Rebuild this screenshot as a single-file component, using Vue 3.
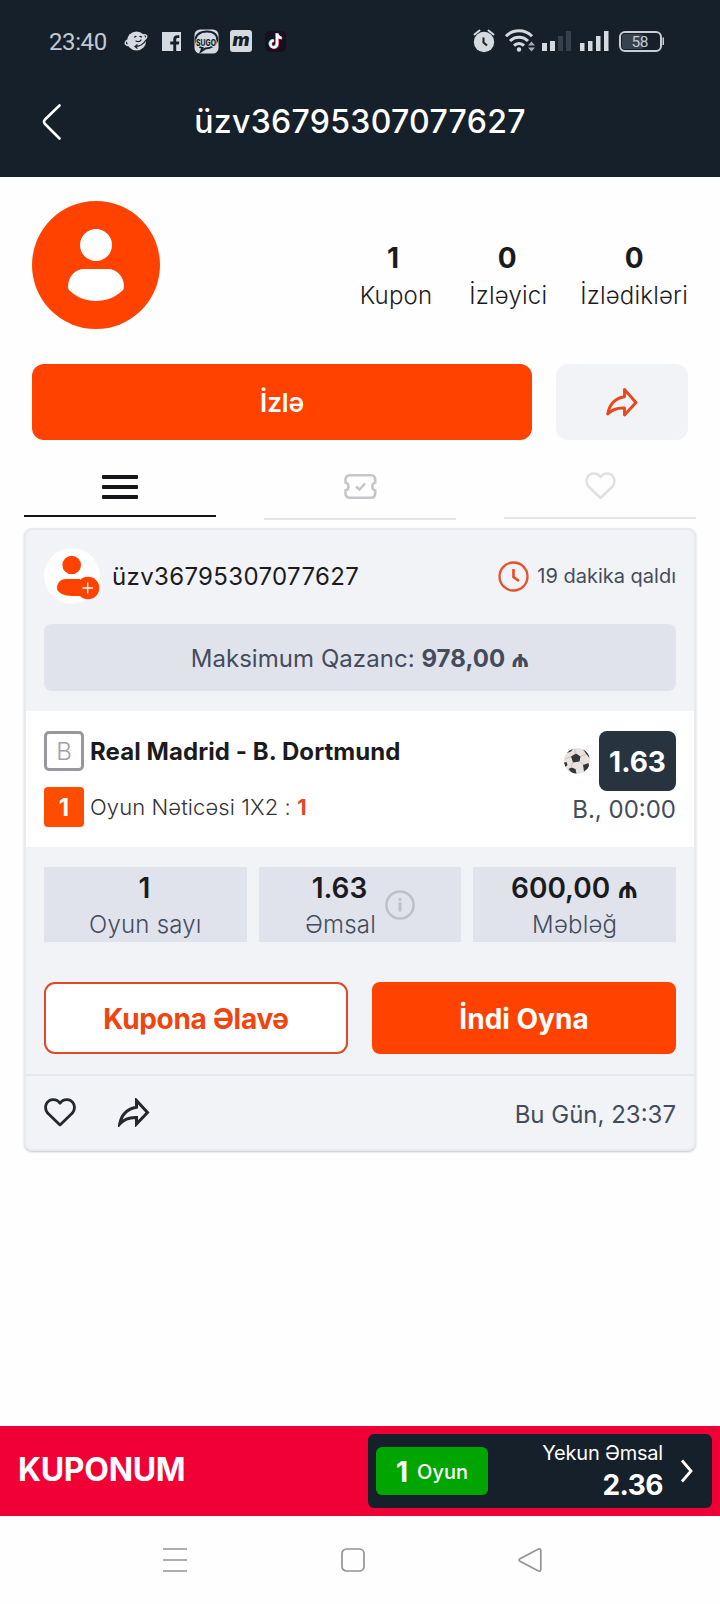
<script setup>
const member = 'üzv36795307077627'
const stats = [
  { value: '1', label: 'Kupon', cls: 'kupon' },
  { value: '0', label: 'İzləyici', cls: 'followers' },
  { value: '0', label: 'İzlədikləri', cls: 'following' },
]
</script>

<template>
  <div class="screen">
    <header class="top">
      <div class="status">
        <span class="clock">23:40</span>
        <svg class="apps" width="168" height="28" viewBox="122 28 168 28">
          <g>
            <circle cx="136.500" cy="41" r="9.600" fill="#d5d9e0" />
            <path d="M127 40c-5 5 1 7 9 4 7-2 13-7 10-9-1-.7-2-.4-3.500.2" fill="none" stroke="#d5d9e0" stroke-width="1.500" />
            <path d="M135 46.500c5 0 9-3 11-6.500M137.500 44.500l-2.500 2 2.500 2" fill="none" stroke="#15202b" stroke-width="1.200" />
            <path d="M134.500 37l1.500-.6M140 36.500l1.500.3M136 41c2 1 4 .5 5-1" fill="none" stroke="#15202b" stroke-width="1.300" stroke-linecap="round" />
          </g>
          <rect x="162" y="32" width="19" height="19" fill="#d5d9e0" />
          <path d="M173.300 51v-6.500h-3.100v-3h3.100v-2.300c0-2.800 1.600-4 4-4h2v2.700h-1.600c-1.100 0-1.500.5-1.500 1.500v2.100h3.100l-.4 3h-2.700V51z" fill="#15202b" />
          <rect x="194.500" y="29.500" width="24" height="24" rx="5.500" fill="#d5d9e0" />
          <path d="M196 42c-1.500-7 4-10.500 11-10.500S218 35 217 41c-1 4-6 7.500-11.500 7.500L201 51.500l1.500-3.500c-3.500-1-5.500-3-6.500-6z" fill="none" stroke="#15202b" stroke-width="2" />
          <text x="196" y="45.500" class="sugo" textLength="20" lengthAdjust="spacingAndGlyphs">SUGO</text>
          <rect x="230" y="30" width="22" height="22" rx="3" fill="#d5d9e0" />
          <text x="232.500" y="46" class="mm" textLength="17" lengthAdjust="spacingAndGlyphs">m</text>
          <rect x="265" y="31" width="21" height="21" rx="5" fill="#180f20" />
          <g fill="none" stroke-width="2.500" transform="translate(1 0)">
            <path d="M276.200 33.500v10.500a3.400 3.400 0 1 1-3.400-3.400M276.200 33.500c.3 2.700 2 4.200 4.500 4.500" stroke="#25e5e2" transform="translate(-.7 -.4)" />
            <path d="M276.200 33.500v10.500a3.400 3.400 0 1 1-3.400-3.400M276.200 33.500c.3 2.700 2 4.200 4.500 4.500" stroke="#ee1e52" transform="translate(.6 .5)" />
            <path d="M276.200 33.500v10.500a3.400 3.400 0 1 1-3.400-3.400M276.200 33.500c.3 2.700 2 4.200 4.500 4.500" stroke="#fff" />
          </g>
        </svg>
        <svg class="signals" width="194" height="28" viewBox="472 28 194 28">
          <circle cx="484" cy="42" r="10.200" fill="#d5d9e0" />
          <path d="M474.500 34.500l5-4M493.500 34.500l-5-4" stroke="#d5d9e0" stroke-width="2" stroke-linecap="round" />
          <path d="M483.500 37.500v5l3.500 3" fill="none" stroke="#15202b" stroke-width="2" />
          <g fill="none" stroke="#d5d9e0" stroke-width="3">
            <path d="M506 36.200a18.500 18.500 0 0 1 26 0" />
            <path d="M510 41a12.500 12.500 0 0 1 18 0" />
            <path d="M514 45.600a7 7 0 0 1 10 0" />
          </g>
          <circle cx="519" cy="49.500" r="2.200" fill="#d5d9e0" />
          <path d="M528 45.500l3.500-4 3.500 4zM528 47.500l3.500 4 3.500-4z" fill="#a4abb5" />
          <path d="M542 43h5v8h-5zM550 41h5v10h-5z" fill="#d5d9e0" />
          <path d="M558 36h5v15h-5zM566 31h5v20h-5z" fill="#34404b" />
          <path d="M580 43h4.500v8H580zM588 41h4.500v10H588zM596 36h4.500v15H596zM604 31h4.500v20H604z" fill="#d5d9e0" />
          <rect x="620" y="32" width="41" height="19" rx="5" fill="#15202b" stroke="#c8cdd4" stroke-width="2" />
          <rect x="622" y="34" width="21" height="15" rx="2.500" fill="#36424d" />
          <rect x="662.500" y="37.500" width="1.500" height="7.500" fill="#c8cdd4" />
          <text x="631.500" y="47" class="charge" textLength="17">58</text>
        </svg>
      </div>
      <div class="titlebar">
        <svg class="back" width="20" height="38" viewBox="0 0 20 38">
          <path d="M17.500 2.500L3 16.500Q1 18.800 3 21L17.500 35.500" fill="none" stroke="#fff" stroke-width="2.600" stroke-linecap="round" stroke-linejoin="round" />
        </svg>
        <h1>{{ member }}</h1>
      </div>
    </header>

    <section class="profile">
      <svg width="128" height="128" viewBox="0 0 128 128">
        <circle cx="64" cy="64" r="64" fill="#ff4200" />
        <circle cx="64" cy="44" r="16" fill="#fff" />
        <path d="M52 68H76C85 68 92 76 92 85.500Q92 88 90.500 89.500C76 103.500 52 103.500 37.500 89.500Q36 88 36 85.500C36 76 43 68 52 68Z" fill="#fff" />
      </svg>
      <div class="stats">
        <div v-for="s in stats" :key="s.label" class="stat" :class="s.cls">
          <b>{{ s.value }}</b>
          <span>{{ s.label }}</span>
        </div>
      </div>
    </section>

    <div class="actions">
      <button class="follow"><span>İzlə</span></button>
      <button class="share">
        <svg width="32" height="29" viewBox="0 0 32 29"><path d="M18.500 1.500L30 14.500L18.500 27V20Q8 19.500 1.700 26Q4.500 11 18.500 8.700Z" fill="none" stroke="#e8481c" stroke-width="2.900" stroke-linejoin="round" /></svg>
      </button>
    </div>

    <nav class="tabs">
      <div class="tab active">
        <i /><i /><i />
      </div>
      <div class="tab second">
        <svg width="33" height="25" viewBox="0 0 33 25">
          <path d="M6 1.300H27Q31.200 1.300 31.200 6V8.500C29.500 9 28.300 10.500 28.300 12.500S29.500 16 31.200 16.500V19Q31.200 23.700 27 23.700H6Q1.500 23.700 1.500 19V16.500C3.300 16 4.500 14.500 4.500 12.500S3.300 9 1.500 8.500V6Q1.500 1.300 6 1.300Z" fill="none" stroke="#c5c6c9" stroke-width="2.600" />
          <path d="M12 12.500L15.500 15.500L21 9.500" fill="none" stroke="#c5c6c9" stroke-width="2.500" />
        </svg>
      </div>
      <div class="tab third">
        <svg width="31" height="28" viewBox="0 0 31 28"><path d="M15.500 26L3.500 14.500C-.5 9.500 2 1.500 9 1.500C12 1.500 14.300 3.200 15.500 5C16.700 3.200 19 1.500 22 1.500C29 1.500 31.500 9.500 27.500 14.500Z" fill="none" stroke="#e0e0e5" stroke-width="2.500" stroke-linejoin="round" /></svg>
      </div>
    </nav>

    <article class="card">
      <div class="owner">
        <svg width="56" height="56" viewBox="0 0 56 56">
          <circle cx="28" cy="28" r="28" fill="#fff" />
          <circle cx="27.700" cy="17" r="9.300" fill="#ff4200" />
          <path d="M22 31H36V48H28C20 48 13 44.500 13 40C13 35.500 16 31 22 31Z" fill="#ff4200" />
          <circle cx="44" cy="40" r="11.300" fill="#ff4200" />
          <path d="M38.500 40h10.500M43.700 34.500v11" stroke="#fff" stroke-width="1.300" />
        </svg>
        <span class="name">{{ member }}</span>
        <svg class="timer" width="31" height="31" viewBox="0 0 31 31">
          <circle cx="15.500" cy="15.500" r="14" fill="none" stroke="#e8502a" stroke-width="2.300" />
          <path d="M15.500 8v8l5.500 4" fill="none" stroke="#e8502a" stroke-width="2.700" />
        </svg>
        <span class="left">19 dakika qaldı</span>
      </div>
      <div class="max"><span>Maksimum Qazanc: <b>978,00 ₼</b></span></div>

      <div class="match">
        <div class="info">
          <div class="line"><span class="box bank">B</span><b class="teams">Real Madrid - B. Dortmund</b></div>
          <div class="line"><span class="box pick">1</span><span class="market">Oyun Nəticəsi 1X2 : <b>1</b></span></div>
        </div>
        <div class="right">
          <div class="oddline">
            <svg width="28" height="28" viewBox="0 0 28 28">
              <circle cx="14" cy="14" r="13" fill="#e9e3df" />
              <path d="M8 9.500L13 6.500L17.500 9.500L16.500 14.500L10 15.500Z" fill="#333638" />
              <path d="M12 6.500V2M17.500 9.500L23 7M16.500 14.500L21 18M10 15.500L8 20M8 9.500L2 12" stroke="#bdb7b3" stroke-width=".8" />
              <path d="M1 15.500L3.500 15L4.500 18L2.500 20ZM5.500 22L8.500 20.500L12.500 22L13.500 26.500Q8.500 26.500 5.500 22ZM20 18L25.500 16L26 19Q24.500 23 21 24.500ZM20 2.500Q25.500 5 26.500 11L24 8ZM4 6Q6 3 10 2L8 4.500Z" fill="#333638" />
            </svg>
            <b class="odd">1.63</b>
          </div>
          <span class="time">B., 00:00</span>
        </div>
      </div>

      <div class="tiles">
        <div class="tile"><div><b class="count">1</b><span>Oyun sayı</span></div></div>
        <div class="tile">
          <div><b class="ratio">1.63</b><span>Əmsal</span></div>
          <svg width="30" height="30" viewBox="0 0 30 30"><circle cx="15" cy="15" r="13.600" fill="none" stroke="#bfc0c3" stroke-width="2.500" /><path d="M15 12.500v9M15 8v2.700" stroke="#bfc0c3" stroke-width="3" /></svg>
        </div>
        <div class="tile"><div><b>600,00 ₼</b><span>Məbləğ</span></div></div>
      </div>

      <div class="play">
        <button class="add"><span>Kupona Əlavə</span></button>
        <button class="now"><span>İndi Oyna</span></button>
      </div>

      <footer>
        <svg width="32" height="29" viewBox="0 0 31 28"><path d="M15.500 26L3.500 14.500C-.5 9.500 2 1.500 9 1.500C12 1.500 14.300 3.200 15.500 5C16.700 3.200 19 1.500 22 1.500C29 1.500 31.500 9.500 27.500 14.500Z" fill="none" stroke="#24272c" stroke-width="2.700" stroke-linejoin="round" /></svg>
        <svg class="fshare" width="32" height="29" viewBox="0 0 32 29"><path d="M18.500 2.500L29.500 14.500L18.500 26V19.500Q8 19 1.700 26Q4.500 11.500 18.500 9.200Z" fill="none" stroke="#24272c" stroke-width="3" stroke-linejoin="miter" /></svg>
        <span>Bu Gün, 23:37</span>
      </footer>
    </article>

    <div class="slip">
      <b class="sliptitle">KUPONUM</b>
      <div class="panel">
        <div class="games"><b>1</b><span>Oyun</span></div>
        <div class="total"><span>Yekun Əmsal</span><b>2.36</b></div>
        <svg width="14" height="24" viewBox="0 0 14 24"><path d="M2 1.500L11 12L2 22.500" fill="none" stroke="#fff" stroke-width="2.800" /></svg>
      </div>
    </div>

    <div class="android">
      <svg width="24" height="24" viewBox="0 0 24 24"><path d="M0 1h24M0 12h24M0 23h24" stroke="#949494" stroke-width="1.700" /></svg>
      <svg width="24" height="24" viewBox="0 0 24 24"><rect x="1" y="1" width="22" height="22" rx="4.500" fill="none" stroke="#949494" stroke-width="1.700" /></svg>
      <svg class="prev" width="24" height="24" viewBox="0 0 24 24"><path d="M2 10.800L20 1.200Q22.800 0 22.800 3V21Q22.800 24 20 22.800L2 13.200Q0 12 2 10.800Z" fill="none" stroke="#949494" stroke-width="1.700" /></svg>
    </div>
  </div>
</template>

<style>
body { margin: 0; background: #fefefe; }
</style>

<style scoped>
* { box-sizing: border-box; }
svg { display: block; flex: none; }
button { border: 0; padding: 0; font: inherit; display: flex; align-items: center; justify-content: center; }
.screen { width: 720px; height: 1604px; display: flex; flex-direction: column; background: #fefefe; font-family: Inter, "Noto Sans", sans-serif; color: #1b1b1d; overflow: hidden; white-space: nowrap; }

.top { height: 177px; background: #15202b; color: #fff; flex: none; }
.status { height: 84px; padding: 28px 54px 0 49px; display: flex; align-items: flex-start; }
.clock { width: 73px; font: 400 24px/28px Roboto, sans-serif; color: #c3c9d1; letter-spacing: -.4px; }
.signals { margin-left: auto; }
.sugo { font: 800 8.500px Inter, sans-serif; fill: #15202b; stroke: #d5d9e0; stroke-width: 2px; paint-order: stroke; }
.mm { font: italic 900 18px Inter, sans-serif; fill: #15202b; }
.charge { font: 400 15.500px Roboto, sans-serif; fill: #c3c9d1; }
.titlebar { height: 76px; display: grid; grid-template-columns: 20px 1fr 20px; align-items: center; padding: 0 42px; }
h1 { margin: 0; font-size: 32px; line-height: 40px; font-weight: 500; text-align: center; letter-spacing: .3px; }

.profile { height: 187px; padding: 24px 32px 0; display: flex; justify-content: space-between; flex: none; }
.stats { display: flex; padding-top: 36px; }
.stat { display: flex; flex-direction: column; align-items: center; }
.stat b { font-size: 28px; line-height: 43px; font-weight: 700; }
.kupon b { margin-right: 6px; }
.followers b { margin-right: 2px; }
.stat span { font-size: 24px; line-height: 31px; font-weight: 350; letter-spacing: .2px; }
.followers { margin-left: 37px; }
.following { margin-left: 33px; }

.actions { display: flex; gap: 24px; padding: 0 32px; height: 76px; flex: none; }
.follow { width: 500px; border-radius: 12px; background: #ff4200; color: #fff; font-weight: 600; font-size: 26px; }
.share { flex: 1; border-radius: 12px; background: #f2f3f7; }

.tabs { height: 88px; padding: 0 24px; display: grid; grid-template-columns: repeat(3, 192px); gap: 48px; align-items: start; flex: none; }
.tab { display: flex; flex-direction: column; align-items: center; border-bottom: 2px solid #e3e4e8; }
.active { height: 77px; padding-top: 35px; gap: 6px; border-color: #15151a; }
.active i { display: block; width: 36px; height: 4px; border-radius: 1px; background: #15151a; }
.second { height: 80px; padding-top: 34px; }
.third { height: 79px; padding-top: 32px; }

.card { width: 672px; height: 623px; margin-left: 24px; flex: none; border: 2px solid #e9eaef; border-radius: 8px; background: #f2f3f7; box-shadow: 0 1px 2px rgba(30, 35, 50, .25); color: #444c5c; display: flex; flex-direction: column; }
.owner { margin: 18px 18px 20px; height: 56px; display: flex; align-items: center; }
.name { margin-left: 12px; font-size: 24px; color: #1b1b1d; letter-spacing: .35px; }
.timer { margin-left: auto; }
.left { margin-left: 8px; font-size: 20px; }
.max { height: 67px; margin: 0 18px 20px; padding-top: 2px; border-radius: 8px; background: #e0e3eb; display: flex; align-items: center; justify-content: center; font-size: 24px; letter-spacing: .05px; }

.match { height: 136px; padding: 20px 18px 0; display: flex; justify-content: space-between; background: #fff; }
.info { display: flex; flex-direction: column; gap: 16px; }
.line { display: flex; align-items: center; height: 40px; gap: 6px; }
.box { width: 40px; height: 40px; display: flex; align-items: center; justify-content: center; border-radius: 4px; font-size: 24px; }
.bank { border: 3px solid #97999c; border-radius: 5px; color: #a0a1a4; font-weight: 300; }
.pick { background: #ff4d00; color: #fff; font-weight: 700; }
.teams { font-size: 24px; color: #1b1b1d; font-weight: 700; letter-spacing: .08px; }
.market { font-size: 22px; color: #333; font-weight: 350; letter-spacing: .1px; }
.market b { color: #dc4b2c; font-weight: 700; }
.right { display: flex; flex-direction: column; align-items: flex-end; }
.oddline { display: flex; align-items: center; gap: 8px; }
.odd { width: 77px; height: 60px; padding-top: 2px; border-radius: 8px; background: #27333f; color: #fff; display: flex; align-items: center; justify-content: center; font-size: 28px; }
.time { font-size: 24px; line-height: 38px; }

.tiles { display: grid; grid-template-columns: repeat(3, 1fr); grid-template-rows: 75px; gap: 12px; margin: 20px 18px 0; height: 75px; }
.tile { background: #e0e3eb; display: flex; align-items: center; justify-content: center; gap: 9px; }
.tile > div { display: flex; flex-direction: column; align-items: center; height: 75px; padding-top: 2px; }
.tile b { font-size: 28px; line-height: 38px; font-weight: 600; color: #1b1b1d; flex: none; }
.tile .ratio, .tile .count { margin-right: 2px; }
.tile span { font-size: 24px; line-height: 36px; font-weight: 350; letter-spacing: .2px; flex: none; }

.play { display: grid; grid-template-columns: 1fr 1fr; gap: 24px; height: 72px; margin: 40px 18px 20px; }
.play button { border-radius: 8px; font-size: 28px; font-weight: 700; padding-top: 2px; }
.add { background: #fff; border: 2px solid #dc4a27; color: #ef4511; letter-spacing: -.3px; }
.play .add { border-radius: 11px; }
.now { background: #ff4200; color: #fff; }
footer { flex: 1; border-top: 2px solid #e6e8ee; padding: 0 18px; display: flex; align-items: center; }
.fshare { margin-left: 42px; }
footer span { margin-left: auto; padding-top: 3px; font-size: 24px; }

.slip { height: 90px; margin-top: 275px; background: #f10036; color: #fff; display: flex; align-items: center; justify-content: space-between; padding: 0 8px 0 18px; flex: none; }
.sliptitle { font-size: 32px; font-weight: 700; line-height: 40px; margin-bottom: 2px; letter-spacing: -.3px; }
.panel { width: 344px; height: 74px; border-radius: 6px; background: #15202b; display: flex; align-items: center; padding: 0 18px 0 8px; }
.games { width: 112px; height: 48px; padding-top: 1px; border-radius: 6px; background: #00a500; display: flex; align-items: center; justify-content: center; gap: 9px; font-size: 20px; font-weight: 500; }
.games b { font-size: 28px; font-weight: 700; }
.total { margin: 0 17px 2px auto; display: flex; flex-direction: column; align-items: flex-end; }
.total span { font-size: 20px; line-height: 30px; letter-spacing: -.2px; }
.total b { font-size: 28px; line-height: 34px; letter-spacing: -.5px; }

.android { flex: 1; display: flex; align-items: flex-start; padding: 32px 0 0 163px; gap: 154px; }
.prev { margin-left: -1px; }
</style>
